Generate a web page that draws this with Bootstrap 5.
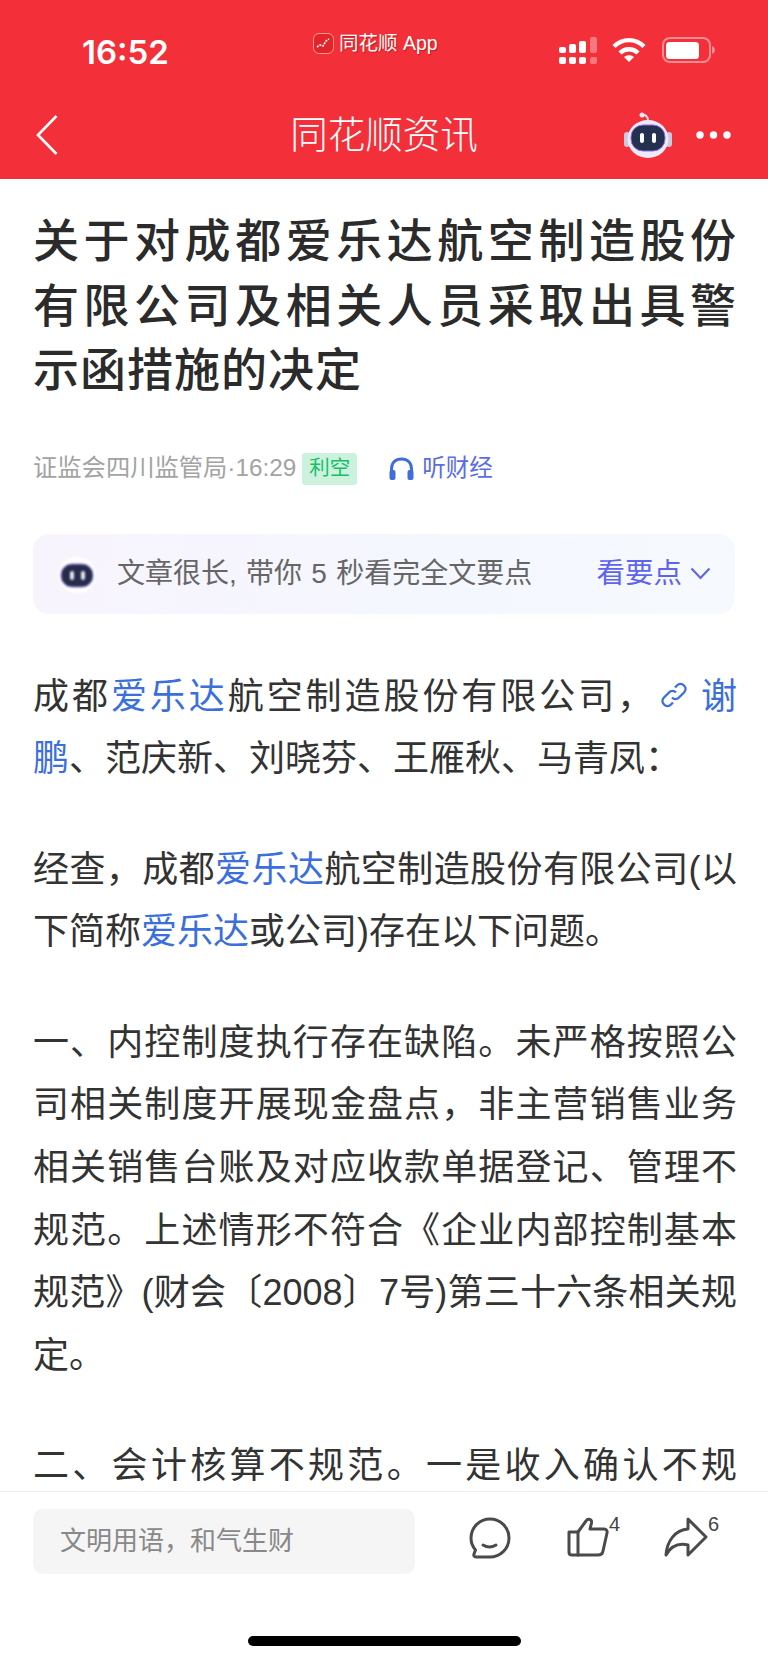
<!DOCTYPE html>
<html lang="zh">
<head>
<meta charset="utf-8">
<meta name="viewport" content="width=device-width, initial-scale=1">
<title>同花顺资讯</title>
<link href="https://cdn.jsdelivr.net/npm/bootstrap@5.3.3/dist/css/bootstrap.min.css" rel="stylesheet">
<script src="https://cdn.jsdelivr.net/npm/bootstrap@5.3.3/dist/js/bootstrap.bundle.min.js"></script>
<style>
  html, body { height: 1663px; overflow: hidden; }
  body { font-family: "Liberation Sans", "Noto Sans CJK SC", sans-serif; background: #fff; color: #333; }
  .phone { width: 768px; height: 1663px; }
  .top-red { background: #f3303a; color: #fff; height: 179px; padding: 32px 37px 0 36px; }
  .status-row { height: 32px; }
  .clock { width: 256px; padding-left: 46px; font-family: Inter, sans-serif; font-size: 33px; font-weight: 600; line-height: 32px; margin-top: 4px; }
  .app-label { font-size: 19.5px; line-height: 22px; text-shadow: 1px 1px 1px rgba(120, 0, 0, .45); margin-left: 21px; }
  .app-logo { width: 21px; height: 21px; border-radius: 6px; background: #e3242c; border: 1px solid #f98; margin-right: 5px; }
  .status-icons { margin-left: auto; margin-right: 16px; padding-top: 5px; }
  .wifi-icon { margin-left: 15px; }
  .head-row { margin-top: 46px; height: 50px; }
  .head-title { font-size: 37.5px; line-height: 50px; font-weight: 300; margin: 0; position: absolute; left: 0; right: 0; text-align: center; }
  .article-box { padding: 30px 31px 0 33px; overflow: hidden; min-height: 0; }
  .news-title { font-size: 46px; line-height: 64.5px; font-weight: 500; letter-spacing: 1px; text-align: justify; color: #2b2b2b; margin: 0; }
  .meta-row { margin-top: 50px; height: 32px; font-size: 24.3px; color: #a3a3a3; }
  .sentiment { background: #ccf2de; color: #16bf68; font-size: 20.5px; line-height: 30px; width: 55px; height: 32px; text-align: center; border-radius: 3px; margin-left: 6px; }
  .listen { color: #5a6ce6; font-size: 23.5px; margin-left: 32px; }
  .summary-box { margin-top: 49px; height: 80px; width: 702px; border-radius: 16px; background: linear-gradient(100deg, #f8f4fd, #f4f7fe 60%, #f6fafe); padding: 0 24px 0 24px; }
  .summary-text { font-size: 28px; word-spacing: 1.5px; color: #666; margin-left: 20px; white-space: nowrap; }
  .summary-more { font-size: 28.5px; color: #5f63ee; margin-left: auto; }
  .summary-bot { filter: blur(1px); }
  .article-text { font-size: 36px; line-height: 62.6px; text-align: justify; color: #333; margin: 52px 0 0; }
  .article-text + .article-text { margin-top: 48px; }
  .article-text a { color: #3b6fdc; text-decoration: none; }
  .chain-icon { margin-left: 4px; }
  .cut-line { text-align-last: justify; }
  .bottom-bar { height: 172px; border-top: 1px solid #eee; background: #fff; padding: 17px 0 0 33px; }
  .comment-box { width: 382px; height: 65px; background: #f5f5f5; border-radius: 10px; font-size: 26px; color: #888; padding-left: 27px; }
  .act-icons { margin-left: 54px; padding-top: 8px; }
  .act-item { height: 46px; }
  .act-like { margin-left: 56px; }
  .act-share { margin-left: 41px; }
  .act-count { font-size: 20px; line-height: 20px; color: #444; margin-top: -3px; width: 14px; }
  .home-line { width: 273px; height: 10px; background: #000; border-radius: 5px; margin: 62px 0 0 215px; }
</style>
</head>
<body>
<div class="phone d-flex flex-column">

  <div class="top-red flex-shrink-0 position-relative">
    <div class="status-row d-flex align-items-start">
      <div class="clock">16:52</div>
      <div class="app-label d-flex align-items-center">
        <span class="app-logo d-inline-flex align-items-center justify-content-center">
          <svg width="15" height="11" viewBox="0 0 15 11"><path d="M1 9 4 7 7 8 10 3 13 1" fill="none" stroke="#fff" stroke-width="1.6" stroke-dasharray="2 1"/></svg>
        </span>同花顺 App
      </div>
      <div class="status-icons d-flex align-items-start">
        <svg width="38" height="27" viewBox="0 0 38 27">
          <rect x="0" y="10" width="7" height="6" rx="2" fill="#fff"/>
          <rect x="10" y="7" width="7" height="9" rx="2" fill="#fff"/>
          <rect x="20" y="4" width="7" height="12" rx="2" fill="#fff"/>
          <rect x="31" y="0" width="7" height="16" rx="2" fill="#fff" opacity=".35"/>
          <rect x="0" y="20" width="7" height="7" rx="2" fill="#fff"/>
          <rect x="10" y="20" width="7" height="7" rx="2" fill="#fff"/>
          <rect x="20" y="20" width="7" height="7" rx="2" fill="#fff"/>
          <rect x="31" y="20" width="7" height="7" rx="2" fill="#fff" opacity=".35"/>
        </svg>
        <svg class="wifi-icon" width="34" height="26" viewBox="0 0 34 26" fill="none" stroke="#fff" stroke-width="4.4">
          <path d="M2 9.5C10.500 1 23.500 1 32 9.500"/>
          <path d="M8 16C13 11 21 11 26 16"/>
          <path d="M17 25 12 20C15 17.500 19 17.500 22 20Z" fill="#fff" stroke="none"/>
        </svg>
        <svg class="ms-3" width="53" height="26" viewBox="0 0 53 26">
          <rect x="1" y="1" width="47" height="24" rx="7" fill="none" stroke="#fff" stroke-opacity=".45" stroke-width="2"/>
          <rect x="4" y="5" width="33" height="17" rx="3.500" fill="#fff"/>
          <path d="M50 9C52 10 53 11.500 53 13S52 16 50 17Z" fill="#fff" fill-opacity=".45"/>
        </svg>
      </div>
    </div>
    <div class="head-row d-flex align-items-center">
      <svg width="22" height="40" viewBox="0 0 22 40" fill="none" stroke="#fff" stroke-width="2.600"><path d="M20.500 1 2 20 20.500 39"/></svg>
      <h1 class="head-title">同花顺资讯</h1>
      <svg class="ms-auto" width="48" height="46" viewBox="0 0 48 46">
        <path d="M24 9C24 4 22 3 19 3" fill="none" stroke="#e4e4f4" stroke-width="1.800"/>
        <circle cx="18" cy="3" r="2.500" fill="#f4e4e8"/>
        <rect x="0" y="20" width="6" height="15" rx="3" fill="#c8c8e0"/>
        <rect x="42" y="20" width="6" height="15" rx="3" fill="#c8c8e0"/>
        <ellipse cx="24" cy="27" rx="20.500" ry="19" fill="#eceaf8"/>
        <rect x="7" y="13" width="34" height="26" rx="12" fill="#24304f" stroke="#8b6fe0" stroke-width="1"/>
        <rect x="16" y="21" width="4" height="10" rx="2" fill="#fff"/>
        <rect x="28" y="21" width="4" height="10" rx="2" fill="#fff"/>
      </svg>
      <svg class="ms-4" width="35" height="8" viewBox="0 0 35 8" fill="#fff">
        <circle cx="4" cy="4" r="3.700"/><circle cx="17.500" cy="4" r="3.700"/><circle cx="31" cy="4" r="3.700"/>
      </svg>
    </div>
  </div>

  <div class="article-box flex-grow-1">
    <h2 class="news-title">关于对成都爱乐达航空制造股份有限公司及相关人员采取出具警示函措施的决定</h2>

    <div class="meta-row d-flex align-items-center">
      <span>证监会四川监管局·16:29</span>
      <span class="sentiment">利空</span>
      <span class="listen d-flex align-items-center">
        <svg class="me-2" width="25" height="23" viewBox="0 0 25 23" fill="none">
          <path d="M2.500 16V12C2.500 5.500 6.500 2 12.500 2S22.500 5.500 22.500 12V16" stroke="#3f6ddc" stroke-width="3"/>
          <rect x="0.500" y="13" width="6" height="10" rx="2" fill="#3f6ddc"/>
          <rect x="18.500" y="13" width="6" height="10" rx="2" fill="#3f6ddc"/>
        </svg>听财经
      </span>
    </div>

    <div class="summary-box d-flex align-items-center">
      <svg class="summary-bot flex-shrink-0" width="40" height="40" viewBox="0 0 40 40">
        <ellipse cx="20" cy="21" rx="19" ry="18" fill="#fff"/>
        <rect x="4" y="10" width="32" height="23" rx="11" fill="#252c4a" stroke="#9a7fe0" stroke-width="1"/>
        <rect x="13" y="17" width="4" height="9" rx="2" fill="#e8e8f0"/>
        <rect x="24" y="17" width="4" height="9" rx="2" fill="#e8e8f0"/>
      </svg>
      <span class="summary-text">文章很长, 带你 5 秒看完全文要点</span>
      <span class="summary-more d-flex align-items-center">看要点
        <svg class="ms-2" width="21" height="13" viewBox="0 0 21 13" fill="none" stroke="#5f63ee" stroke-width="2.200"><path d="M1.500 1.500 10.500 11 19.500 1.500"/></svg>
      </span>
    </div>

    <p class="article-text">成都<a href="#">爱乐达</a>航空制造股份有限公司，<a href="#"><svg class="chain-icon align-baseline" width="28" height="28" viewBox="0 0 28 28" fill="none" stroke="#3b6fdc" stroke-width="2.400"><path d="M12 16.500C14 18.500 17 18.500 19 16.500L24 11.500C26 9.500 26 6.500 24 4.500S19 2.500 17 4.500L15 6.500"/><path d="M16 11.500C14 9.500 11 9.500 9 11.500L4 16.500C2 18.500 2 21.500 4 23.500S9 25.500 11 23.500L13 21.500"/></svg> 谢鹏</a>、范庆新、刘晓芬、王雁秋、马青凤：</p>
    <p class="article-text">经查，成都<a href="#">爱乐达</a>航空制造股份有限公司(以下简称<a href="#">爱乐达</a>或公司)存在以下问题。</p>
    <p class="article-text">一、内控制度执行存在缺陷。未严格按照公司相关制度开展现金盘点，非主营销售业务相关销售台账及对应收款单据登记、管理不规范。上述情形不符合《企业内部控制基本规范》(财会〔2008〕7号)第三十六条相关规定。</p>
    <p class="article-text cut-line">二、会计核算不规范。一是收入确认不规</p>
  </div>

  <div class="bottom-bar flex-shrink-0">
    <div class="d-flex align-items-start">
      <div class="comment-box d-flex align-items-center">文明用语，和气生财</div>
      <div class="act-icons d-flex">
        <div class="act-item d-flex align-items-start">
          <svg width="42" height="42" viewBox="0 0 42 42" fill="none" stroke="#4a4a4a" stroke-width="3" stroke-linejoin="round" stroke-linecap="round">
            <path d="M21 2C31 2 40 10 40 21S31 40 21 40H7C5 40 4.500 38.500 5 37L6.500 33C3.500 29.500 2 25.500 2 21 2 10 11 2 21 2Z"/>
            <path d="M14 28C18 30.500 23 30.500 27 28"/>
          </svg>
        </div>
        <div class="act-item act-like d-flex align-items-start">
          <svg width="42" height="40" viewBox="0 0 42 40" fill="none" stroke="#4a4a4a" stroke-width="3" stroke-linejoin="round" stroke-linecap="round">
            <path d="M2 15H11V38H5C3 38 2 37 2 35Z"/>
            <path d="M11 15 19 4C21 1 25 2 24.500 6L23 12H37C39.500 12 40.500 14 40 16L36 34C35.500 37 34 38 31 38H11"/>
          </svg>
          <span class="act-count">4</span>
        </div>
        <div class="act-item act-share d-flex align-items-start">
          <svg width="44" height="40" viewBox="0 0 44 40" fill="none" stroke="#4a4a4a" stroke-width="3" stroke-linejoin="round" stroke-linecap="round">
            <path d="M24 2 42 20 24 38 24 28C15 26 7 29 2 38 3 24 11 13 24 12Z"/>
          </svg>
          <span class="act-count">6</span>
        </div>
      </div>
    </div>
    <div class="home-line"></div>
  </div>

</div>
</body>
</html>
